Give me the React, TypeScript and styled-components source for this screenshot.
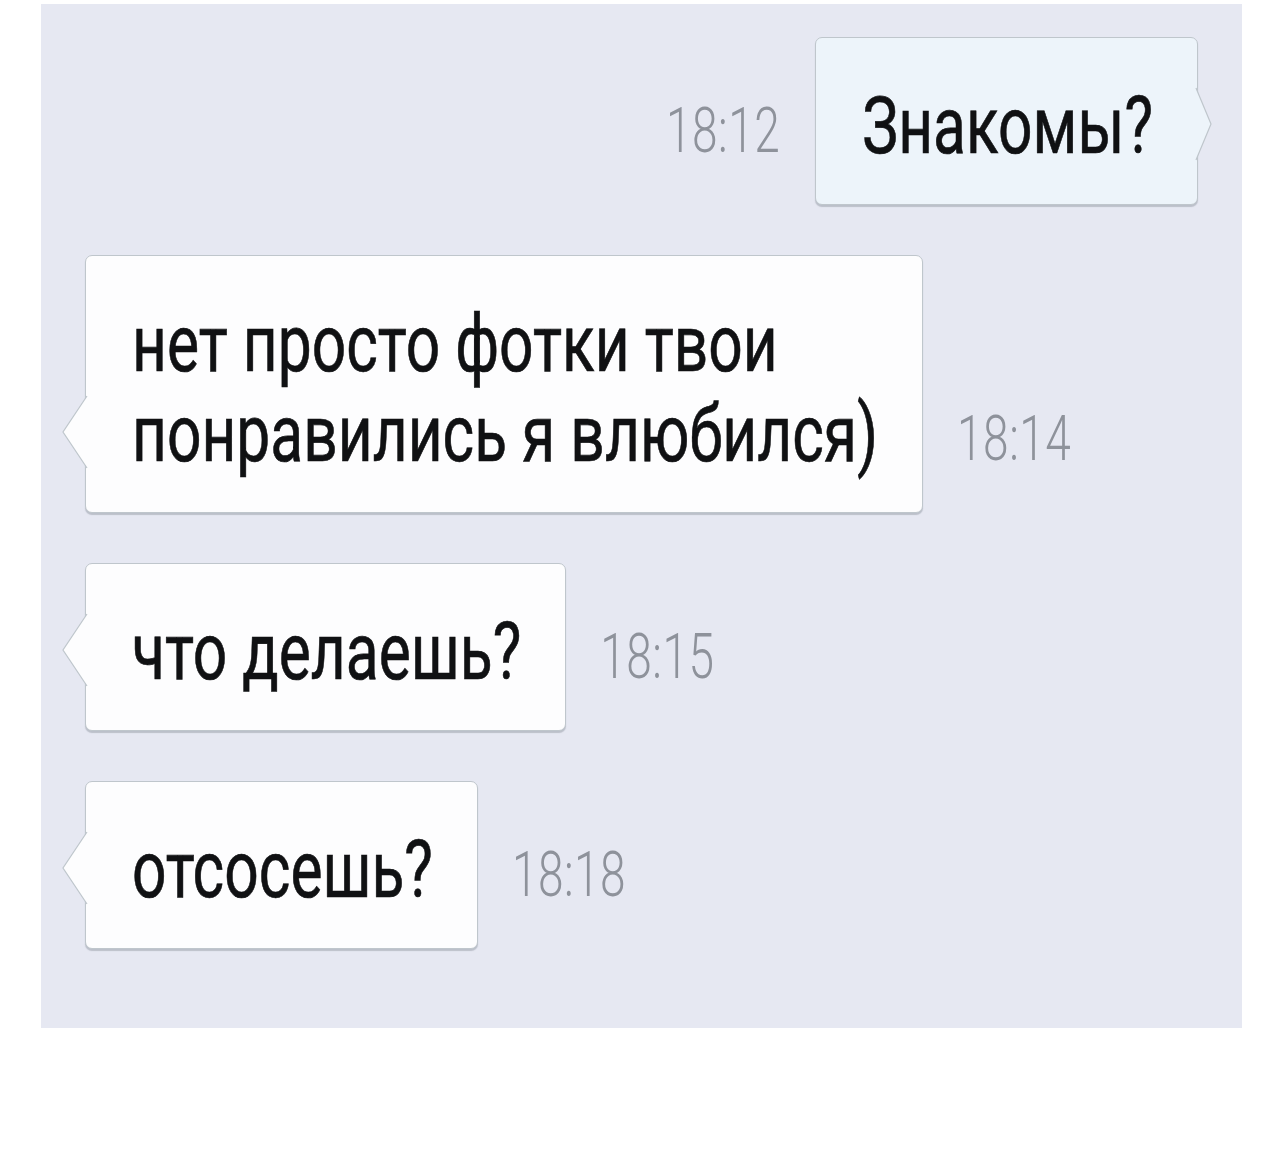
import React from "react";
import styled, { createGlobalStyle } from "styled-components";

const GlobalStyle = createGlobalStyle`
  html, body {
    margin: 0;
    padding: 0;
    background: #ffffff;
  }
  body {
    font-family: Roboto, "Noto Sans", "Liberation Sans", sans-serif;
  }
`;

const Page = styled.div`
  width: 1280px;
  height: 1150px;
  background: #ffffff;
  padding: 4px 0 0 41px;
  box-sizing: border-box;
`;

const Panel = styled.div`
  width: 1201px;
  height: 1024px;
  box-sizing: border-box;
  background: #e6e8f2;
  padding: 33px 44px 0 44px;
  display: flex;
  flex-direction: column;
  gap: 50px;
`;

const Row = styled.div<{ $out?: boolean }>`
  display: flex;
  align-items: flex-end;
  justify-content: ${(p) => (p.$out ? "flex-end" : "flex-start")};
  gap: ${(p) => (p.$out ? "35px" : "34px")};
`;

const Bubble = styled.div<{ $out?: boolean }>`
  position: relative;
  box-sizing: border-box;
  padding: 44px 44px 32px 46px;
  background: ${(p) => (p.$out ? "#edf4fa" : "#fdfdfe")};
  border: 1px solid #bfc6cc;
  border-radius: 7px;
  box-shadow: 0 2px 1px rgba(90, 100, 110, 0.3);
`;

const Line = styled.span`
  display: block;
  height: 90px;
  font-size: 60.5px;
  line-height: 90px;
  color: #101113;
  white-space: nowrap;
  -webkit-text-stroke: 0.5px #101113;
  transform: scaleY(1.31);
  transform-origin: 50% 50%;
`;

const Time = styled.span`
  display: block;
  font-size: 46px;
  line-height: 46px;
  font-weight: 300;
  color: #8e929b;
  margin-bottom: 46px;
  white-space: nowrap;
  letter-spacing: 0.5px;
  transform: scaleY(1.36);
  transform-origin: 50% 84%;
`;

const Tail = styled.svg<{ $out?: boolean }>`
  position: absolute;
  bottom: 44px;
  height: 72px;
  overflow: visible;
  ${(p) =>
    p.$out
      ? "right: -15px; width: 16px;"
      : "left: -24px; width: 25px;"}
`;

function BubbleTail({ out, fill }: { out?: boolean; fill: string }) {
  if (out) {
    return (
      <Tail $out viewBox="0 0 16 72">
        <polygon points="0,0 15,36 0,72" fill={fill} />
        <polyline
          points="0,0 15,36 0,72"
          fill="none"
          stroke="#bfc6cc"
          strokeWidth="1.2"
        />
      </Tail>
    );
  }
  return (
    <Tail viewBox="0 0 25 72">
      <polygon points="25,0 1,36 25,72" fill={fill} />
      <polyline
        points="25,0 1,36 25,72"
        fill="none"
        stroke="#bfc6cc"
        strokeWidth="1.2"
      />
    </Tail>
  );
}

type Msg = { lines: string[]; time: string; out?: boolean };

const messages: Msg[] = [
  { lines: ["Знакомы?"], time: "18:12", out: true },
  { lines: ["нет просто фотки твои", "понравились я влюбился)"], time: "18:14" },
  { lines: ["что делаешь?"], time: "18:15" },
  { lines: ["отсосешь?"], time: "18:18" },
];

export default function App() {
  return (
    <>
      <GlobalStyle />
      <Page>
        <Panel>
          {messages.map((m, i) => (
            <Row key={i} $out={m.out}>
              {m.out && <Time>{m.time}</Time>}
              <Bubble $out={m.out}>
                <BubbleTail out={m.out} fill={m.out ? "#edf4fa" : "#fdfdfe"} />
                {m.lines.map((l, j) => (
                  <Line key={j}>{l}</Line>
                ))}
              </Bubble>
              {!m.out && <Time>{m.time}</Time>}
            </Row>
          ))}
        </Panel>
      </Page>
    </>
  );
}
